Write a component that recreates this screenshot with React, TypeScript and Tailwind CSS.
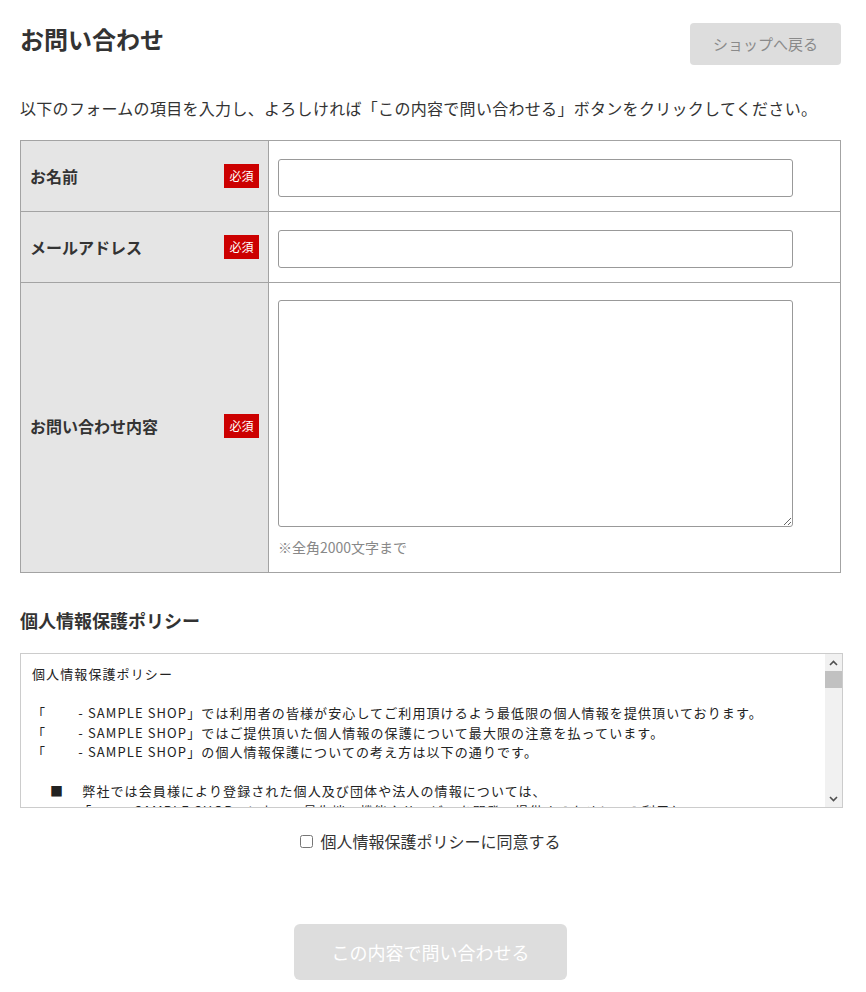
const policyLines = [
  "個人情報保護ポリシー",
  "",
  "「　　 - SAMPLE SHOP」では利用者の皆様が安心してご利用頂けるよう最低限の個人情報を提供頂いております。",
  "「　　 - SAMPLE SHOP」ではご提供頂いた個人情報の保護について最大限の注意を払っています。",
  "「　　 - SAMPLE SHOP」の個人情報保護についての考え方は以下の通りです。",
  "",
  "　 ■　 弊社では会員様により登録された個人及び団体や法人の情報については、",
  "　　　 「　　 - SAMPLE SHOP」において最先端の機能やサービスを開発・提供するためにのみ利用し、",
  "　　　 会員個人情報の保護に細心の注意を払うものとします。",
];

function Badge() {
  return (
    <span className="flex h-6 w-[35px] items-center justify-center bg-[#cc0000] text-[12px] leading-none text-white">
      必須
    </span>
  );
}

function LabelCell({ label, last }: { label: string; last?: boolean }) {
  return (
    <div
      className={`flex items-center justify-between border-r border-[#a3a3a3] bg-[#e5e5e5] px-[9px] ${last ? "pb-[3px]" : "border-b"}`}
    >
      <span className="text-[16px] font-bold text-[#333]">{label}</span>
      <Badge />
    </div>
  );
}

function Chevron({ up }: { up?: boolean }) {
  return (
    <svg width="9" height="6" viewBox="0 0 9 6" className="text-[#505050]">
      <path
        d={up ? "M1 5 L4.5 1.5 L8 5" : "M1 1 L4.5 4.5 L8 1"}
        fill="none"
        stroke="currentColor"
        strokeWidth="1.6"
      />
    </svg>
  );
}

export default function App() {
  return (
    <div className="min-h-[992px] bg-white font-['Noto_Sans_CJK_JP','Noto_Sans',sans-serif] text-[#333]">
      <div className="ml-5 w-[821px] pt-[23px]">
        <div className="flex items-start justify-between">
          <h1 className="mt-[4px] text-[24px] font-bold leading-none text-[#333]">お問い合わせ</h1>
          <button className="h-[42px] w-[151px] rounded-[4px] bg-[#dddddd] text-[15px] text-[#8a8a8a]">
            ショップへ戻る
          </button>
        </div>

        <p className="mt-[31px] text-[16px] leading-6 tracking-[0.3px] text-[#333]">
          以下のフォームの項目を入力し、よろしければ「この内容で問い合わせる」ボタンをクリックしてください。
        </p>

        <div className="mt-5 grid grid-cols-[248px_1fr] border border-[#a3a3a3]">
          <LabelCell label="お名前" />
          <div className="border-b border-[#a3a3a3] pl-[9px] pt-[18px] pb-[14px]">
            <input className="block h-[38px] w-[515px] rounded-[3px] border border-[#999] bg-white px-2 outline-none" />
          </div>

          <LabelCell label="メールアドレス" />
          <div className="border-b border-[#a3a3a3] pl-[9px] pt-[18px] pb-[14px]">
            <input className="block h-[38px] w-[515px] rounded-[3px] border border-[#999] bg-white px-2 outline-none" />
          </div>

          <LabelCell label="お問い合わせ内容" last />
          <div className="pl-[9px] pt-[17px] pb-[15px]">
            <textarea className="block h-[227px] w-[515px] rounded-[3px] border border-[#999] bg-white p-2 outline-none" />
            <p className="mt-[10px] text-[14px] leading-5 text-[#888]">※全角2000文字まで</p>
          </div>
        </div>

        <h2 className="mt-[34px] text-[18px] font-bold leading-[26px] text-[#333]">個人情報保護ポリシー</h2>

        <div className="mt-5 flex h-[155px] w-[823px] border border-[#cccccc] bg-white">
          <div className="flex-1 overflow-hidden pl-[11px] pt-[10px]">
            {policyLines.map((line, i) => (
              <div key={i} className="h-[19.5px] whitespace-pre text-[13px] leading-[19.5px] tracking-[1.1px] text-[#222]">
                {line}
              </div>
            ))}
          </div>
          <div className="flex w-[17px] flex-col bg-[#f1f1f1]">
            <div className="flex h-[17px] items-center justify-center">
              <Chevron up />
            </div>
            <div className="h-[17px] bg-[#c1c1c1]" />
            <div className="flex-1" />
            <div className="flex h-[17px] items-center justify-center">
              <Chevron />
            </div>
          </div>
        </div>

        <label className="mt-[21px] flex h-6 items-center justify-center gap-[7px]">
          <input type="checkbox" className="h-[13px] w-[13px]" />
          <span className="text-[16px] leading-6 text-[#333]">個人情報保護ポリシーに同意する</span>
        </label>

        <div className="mt-[71px] flex justify-center">
          <button className="h-[56px] w-[273px] rounded-[6px] bg-[#dddddd] text-[18px] text-white">
            この内容で問い合わせる
          </button>
        </div>
      </div>
    </div>
  );
}
